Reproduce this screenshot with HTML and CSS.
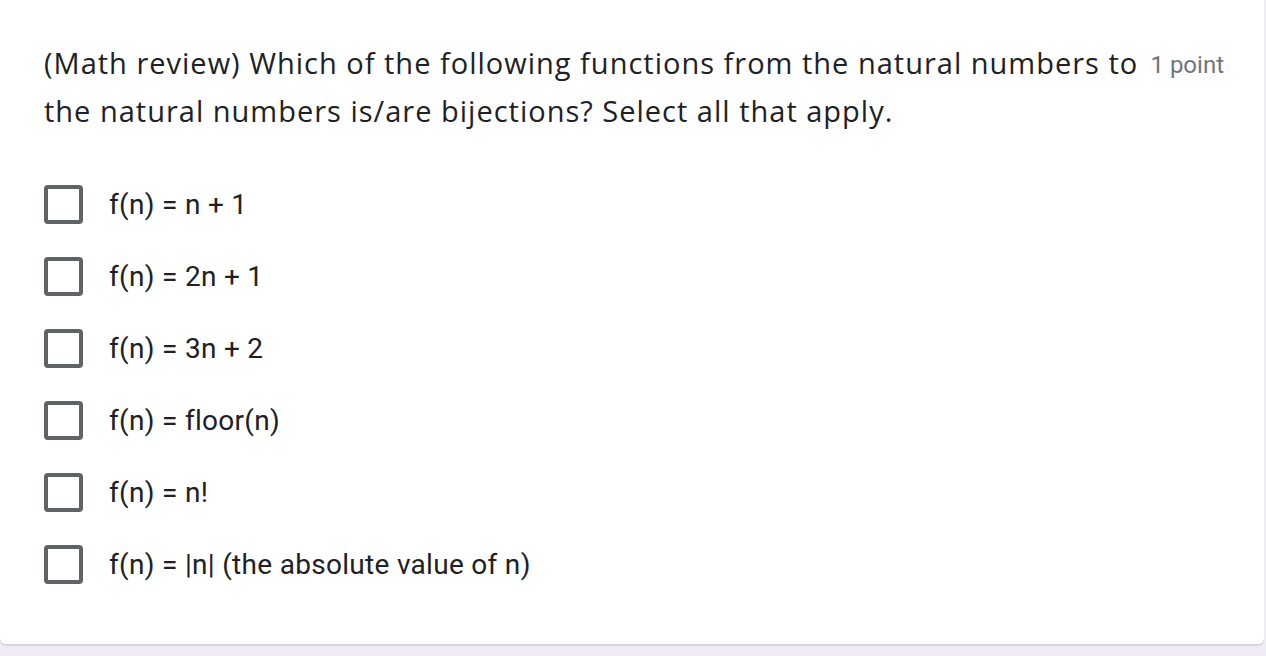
FILE: index.html
```html
<!DOCTYPE html>
<html>
<head>
<meta charset="utf-8">
<link rel="stylesheet" href="styles.css">
</head>
<body>
<div class="card">
  <div class="header">
    <div class="title">(Math review) Which of the following functions from the natural numbers to the natural numbers is/are bijections? Select all that apply.</div>
    <div class="points">1 point</div>
  </div>
  <div class="options">
    <div class="option"><span class="box"></span><span class="label">f(n) = n + 1</span></div>
    <div class="option"><span class="box"></span><span class="label">f(n) = 2n + 1</span></div>
    <div class="option"><span class="box"></span><span class="label">f(n) = 3n + 2</span></div>
    <div class="option"><span class="box"></span><span class="label">f(n) = floor(n)</span></div>
    <div class="option"><span class="box"></span><span class="label">f(n) = n!</span></div>
    <div class="option"><span class="box"></span><span class="label">f(n) = |n| (the absolute value of n)</span></div>
  </div>
</div>
</body>
</html>
```
FILE: styles.css
```css
html, body {
  margin: 0;
  padding: 0;
}
body {
  background: #efebf7;
  width: 1266px;
  height: 656px;
  overflow: hidden;
}
.card {
  background: #ffffff;
  width: 1264px;
  height: 644px;
  border-radius: 0 0 6px 6px;
  box-shadow: 0 2px 0 #d6d6d9;
  box-sizing: border-box;
  padding: 39px 0 0 44px;
}
.header {
  display: flex;
  align-items: flex-start;
  width: 1180px;
}
.title {
  width: 1104px;
  flex: none;
  font-family: "Open Sans", sans-serif;
  font-size: 29px;
  line-height: 48px;
  color: #202124;
  letter-spacing: 1px;
}
.points {
  margin-left: auto;
  font-family: Roboto, sans-serif;
  font-size: 24px;
  line-height: 48px;
  color: #70757a;
  white-space: nowrap;
  padding-top: 2px;
}
.options {
  display: flex;
  flex-direction: column;
  margin-top: 33px;
}
.option {
  display: flex;
  align-items: center;
  height: 72px;
}
.box {
  width: 39px;
  height: 39px;
  box-sizing: border-box;
  border: 4px solid #5f6368;
  border-radius: 4px;
  flex: none;
}
.label {
  margin-left: 26px;
  font-family: Roboto, sans-serif;
  font-size: 28px;
  color: #202124;
  letter-spacing: 0.3px;
}
```
